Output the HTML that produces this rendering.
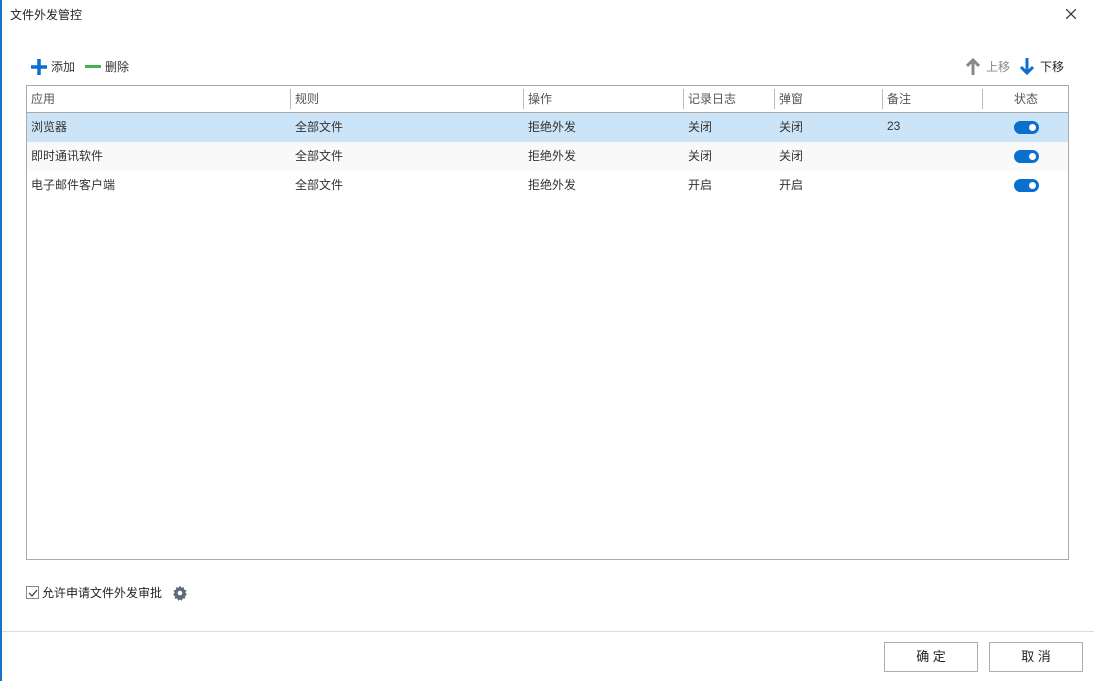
<!DOCTYPE html><html><head><meta charset="utf-8"><style>
body{margin:0;width:1094px;height:681px;background:#fff;font-family:"Liberation Sans","Noto Sans CJK SC",sans-serif;font-size:12px;color:#333;position:relative;overflow:hidden}
.a{position:absolute}
.tg{position:absolute;width:25px;height:13px;border-radius:7px;background:#0a6fcf;left:1014px}
.tg:after{content:"";position:absolute;right:3px;top:3px;width:7px;height:7px;border-radius:50%;background:#fff}
.hd{position:absolute;top:90px;color:#555}
.dv{position:absolute;top:89px;width:1px;height:20px;background:#bbb}
.btn{position:absolute;top:642px;width:92px;height:28px;border:1px solid #adadad;background:#fff;text-align:center;line-height:28px;font-size:13px;color:#222}
</style></head><body>
<div class="a" style="left:0;top:0;width:2px;height:681px;background:#1a73c8"></div>
<div class="a" style="left:10px;top:6px;font-size:12px;color:#222">文件外发管控</div>
<svg class="a" style="left:1066px;top:9px" width="10" height="10"><path d="M0 0L10 10M10 0L0 10" stroke="#333" stroke-width="1.2"/></svg>
<svg class="a" style="left:31px;top:59px" width="16" height="16"><path d="M8 0V16M0 8H16" stroke="#0a6fcf" stroke-width="3.5"/></svg>
<div class="a" style="left:51px;top:58px">添加</div>
<div class="a" style="left:85px;top:65px;width:16px;height:3px;background:#4caf50"></div>
<div class="a" style="left:105px;top:58px">删除</div>
<svg class="a" style="left:966px;top:58px" width="14" height="17"><path d="M7 17V2M1 8L7 2L13 8" stroke="#888" stroke-width="3" fill="none"/></svg>
<div class="a" style="left:986px;top:58px;color:#888">上移</div>
<svg class="a" style="left:1020px;top:58px" width="14" height="17"><path d="M7 0V15M1 9L7 15L13 9" stroke="#0a6fcf" stroke-width="3" fill="none"/></svg>
<div class="a" style="left:1040px;top:58px;color:#222">下移</div>
<div class="a" style="left:26px;top:85px;width:1041px;height:473px;border:1px solid #aaa"></div>
<div class="a" style="left:27px;top:112px;width:1041px;height:1px;background:#aaa"></div>
<div class="a" style="left:27px;top:113px;width:1041px;height:29px;background:#cce4f7"></div>
<div class="a" style="left:27px;top:142px;width:1041px;height:29px;background:#f9f9f9"></div>
<div class="dv" style="left:290px"></div><div class="dv" style="left:523px"></div><div class="dv" style="left:683px"></div><div class="dv" style="left:774px"></div><div class="dv" style="left:882px"></div><div class="dv" style="left:982px"></div>
<div class="hd" style="left:31px">应用</div><div class="hd" style="left:295px">规则</div><div class="hd" style="left:528px">操作</div><div class="hd" style="left:688px">记录日志</div><div class="hd" style="left:779px">弹窗</div><div class="hd" style="left:887px">备注</div><div class="hd" style="left:1014px">状态</div>
<div class="a" style="left:31px;top:118px">浏览器</div><div class="a" style="left:295px;top:118px">全部文件</div><div class="a" style="left:528px;top:118px">拒绝外发</div><div class="a" style="left:688px;top:118px">关闭</div><div class="a" style="left:779px;top:118px">关闭</div><div class="a" style="left:887px;top:119px">23</div>
<div class="a" style="left:31px;top:147px">即时通讯软件</div><div class="a" style="left:295px;top:147px">全部文件</div><div class="a" style="left:528px;top:147px">拒绝外发</div><div class="a" style="left:688px;top:147px">关闭</div><div class="a" style="left:779px;top:147px">关闭</div>
<div class="a" style="left:31px;top:176px">电子邮件客户端</div><div class="a" style="left:295px;top:176px">全部文件</div><div class="a" style="left:528px;top:176px">拒绝外发</div><div class="a" style="left:688px;top:176px">开启</div><div class="a" style="left:779px;top:176px">开启</div>
<div class="tg" style="top:121px"></div><div class="tg" style="top:150px"></div><div class="tg" style="top:179px"></div>
<div class="a" style="left:26px;top:586px;width:11px;height:11px;border:1px solid #888"></div>
<svg class="a" style="left:28px;top:588px" width="10" height="10"><path d="M1 5L4 8L9 2" stroke="#333" stroke-width="1.2" fill="none"/></svg>
<div class="a" style="left:42px;top:584px;color:#222">允许申请文件外发审批</div>
<svg class="a" style="left:172px;top:585px" width="16" height="16" viewBox="0 0 16 16"><path d="M8 0.5l1.3 2.2 2.4-.7.3 2.5 2.4.9-1 2.3 1.6 1.9-2 1.4.3 2.5-2.5-.1-1 2.3L8 14.5l-1.8 1.3-1-2.3-2.5.1.3-2.5-2-1.4L2.6 7.8l-1-2.3 2.4-.9.3-2.5 2.4.7z" fill="#5f6b7a"/><circle cx="8" cy="8" r="2.3" fill="#fff"/></svg>
<div class="a" style="left:2px;top:631px;width:1092px;height:1px;background:#ddd"></div>
<div class="btn" style="left:884px">确 定</div><div class="btn" style="left:989px">取 消</div>
</body></html>
